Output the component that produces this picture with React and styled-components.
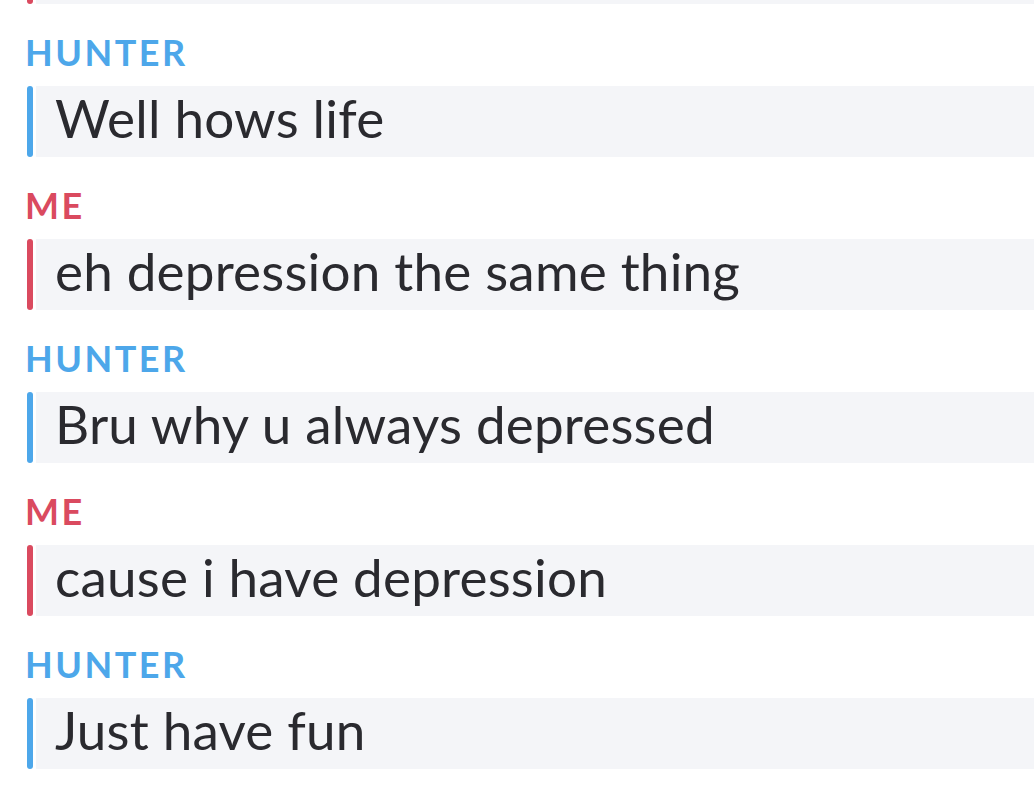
import styled, { createGlobalStyle } from "styled-components";

const GlobalStyle = createGlobalStyle`
  html, body {
    margin: 0;
    padding: 0;
    background: #ffffff;
  }
  body {
    font-family: "Lato", "Noto Sans", sans-serif;
    overflow: hidden;
  }
`;

const Thread = styled.div`
  display: flex;
  flex-direction: column;
  padding-left: 25px;
  margin-top: -67px;
`;

const Message = styled.div`
  display: flex;
  flex-direction: column;
  margin-bottom: 30px;
`;

const Sender = styled.div`
  font-size: 36px;
  line-height: 36px;
  font-weight: 700;
  letter-spacing: 2.5px;
  text-transform: uppercase;
  color: ${(p) => (p.$me ? "#da4a5f" : "#4da7ea")};
  margin-bottom: 16px;
`;

const Row = styled.div`
  display: flex;
  align-items: stretch;
  height: 71px;
  gap: 3px;
`;

const Bar = styled.div`
  flex: 0 0 6px;
  margin-left: 2px;
  border-radius: 3px;
  background: ${(p) => (p.$me ? "#da4a5f" : "#4da7ea")};
`;

const Bubble = styled.div`
  flex: 1;
  background: #f4f5f8;
  padding: 0 0 8px 19px;
  font-size: 53px;
  line-height: 63px;
  letter-spacing: 0.2px;
  color: #2a2a2f;
  white-space: nowrap;
  overflow: hidden;
`;

const messages = [
  { me: false, text: "Well hows life" },
  { me: true, text: "eh depression the same thing" },
  { me: false, text: "Bru why u always depressed" },
  { me: true, text: "cause i have depression" },
  { me: false, text: "Just have fun" },
];

export default function App() {
  return (
    <>
      <GlobalStyle />
      <Thread>
        <Message>
          <Row>
            <Bar $me />
            <Bubble />
          </Row>
        </Message>
        {messages.map((m, i) => (
          <Message key={i}>
            <Sender $me={m.me}>{m.me ? "Me" : "Hunter"}</Sender>
            <Row>
              <Bar $me={m.me} />
              <Bubble>{m.text}</Bubble>
            </Row>
          </Message>
        ))}
      </Thread>
    </>
  );
}
